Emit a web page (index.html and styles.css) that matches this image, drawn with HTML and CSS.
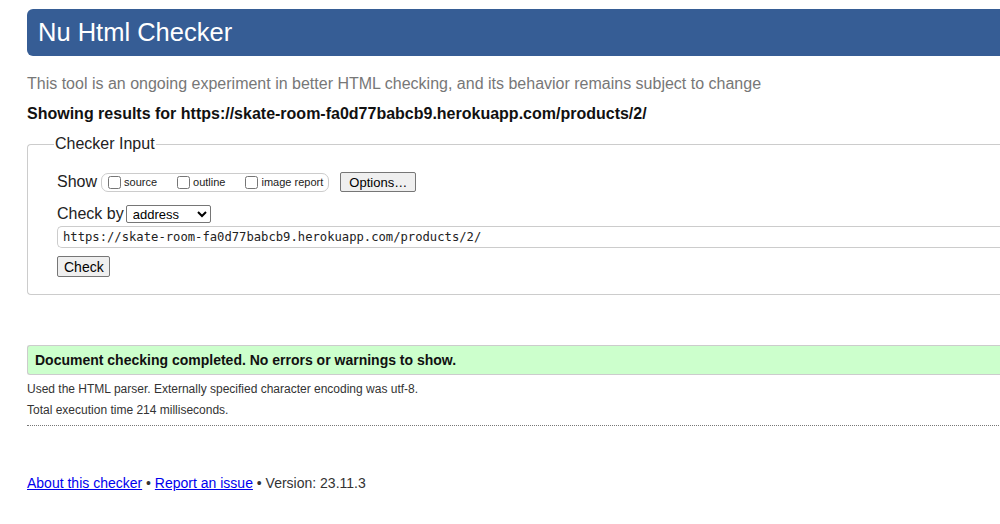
FILE: index.html
```html
<!DOCTYPE html>
<html>
<head>
<meta charset="utf-8">
<title>Nu Html Checker</title>
<link rel="stylesheet" href="styles.css">
</head>
<body>
<div class="page">
  <h1 class="header">Nu Html Checker</h1>
  <p class="intro">This tool is an ongoing experiment in better HTML checking, and its behavior remains subject to change</p>
  <p class="showing">Showing results for https://skate-room-fa0d77babcb9.herokuapp.com/products/2/</p>
  <fieldset class="input">
    <legend>Checker Input</legend>
    <div class="row show-row">
      <span class="label">Show</span>
      <span class="opts">
        <label><input type="checkbox">source</label>
        <label><input type="checkbox">outline</label>
        <label><input type="checkbox">image report</label>
      </span>
      <button class="btn options">Options…</button>
    </div>
    <div class="row by-row">
      <span class="label">Check by</span>
      <select class="sel"><option>address</option></select>
    </div>
    <input class="url" type="text" value="https://skate-room-fa0d77babcb9.herokuapp.com/products/2/">
    <button class="btn check">Check</button>
  </fieldset>
  <p class="success">Document checking completed. No errors or warnings to show.</p>
  <p class="details">Used the HTML parser. Externally specified character encoding was utf-8.</p>
  <p class="details">Total execution time 214 milliseconds.</p>
  <hr class="dots">
  <p class="footer"><a href="#">About this checker</a> • <a href="#">Report an issue</a> • Version: 23.11.3</p>
</div>
</body>
</html>
```
FILE: styles.css
```css
html, body {
  margin: 0;
  padding: 0;
  background: #fff;
  overflow: hidden;
}
.page {
  width: 1020px;
  padding: 9px 0 0 27px;
  font-family: "Liberation Sans", Arial, sans-serif;
  color: #222;
}
.header {
  margin: 0;
  height: 47px;
  background: #365d95;
  color: #fff;
  font-weight: normal;
  font-size: 25.5px;
  line-height: 47px;
  padding-left: 11px;
  border-radius: 6px 0 0 6px;
}
.intro {
  margin: 18px 0 0 0;
  font-size: 16px;
  line-height: 20px;
  color: #777;
}
.showing {
  margin: 10px 0 0 0;
  font-size: 16px;
  line-height: 20px;
  font-weight: bold;
  color: #111;
}
.input {
  margin: 11px 0 0 0;
  padding: 21px 0 17px 29px;
  border: 1px solid #ccc;
  border-radius: 4px 0 0 4px;
  border-right: none;
}
.input legend {
  font-size: 16px;
  color: #222;
  padding: 0 1px;
  margin-left: -3px;
  margin-bottom: -2px;
}
.row {
  display: flex;
  align-items: center;
}
.label {
  font-size: 16px;
  color: #222;
}
.show-row {
  height: 20px;
}
.opts {
  display: inline-flex;
  align-items: center;
  margin-left: 4px;
  height: 17px;
  border: 1px solid #ccc;
  border-radius: 7px;
  padding: 0 5px 0 6px;
  font-size: 11px;
}
.opts label {
  display: inline-flex;
  align-items: center;
  margin-right: 20px;
}
.opts label:last-child {
  margin-right: 0;
}
.opts input {
  margin: 0 3px 0 0;
  width: 13px;
  height: 13px;
}
.btn {
  font-family: "Liberation Sans", Arial, sans-serif;
  font-size: 13px;
  color: #000;
  background: #efefef;
  border: 1px solid #767676;
  border-radius: 2px;
  padding: 0 6px;
  height: 20px;
}
.options {
  margin-left: 11px;
  padding: 0 7px;
  width: 76px;
}
.by-row {
  margin-top: 12px;
  height: 20px;
}
.sel {
  margin-left: 2px;
  width: 85px;
  height: 18px;
  font-family: "Liberation Sans", Arial, sans-serif;
  font-size: 13px;
  border: 1px solid #767676;
  border-radius: 2px;
  background: #fff;
  padding: 0 2px;
}
.url {
  display: block;
  margin-top: 2px;
  width: 960px;
  height: 22px;
  box-sizing: border-box;
  border: 1px solid #ccc;
  border-right: none;
  border-radius: 5px 0 0 5px;
  padding: 0 5px;
  font-family: "DejaVu Sans Mono", monospace;
  font-size: 12.2px;
  color: #222;
}
.check {
  display: block;
  margin-top: 8px;
  width: 53px;
  height: 21px;
  font-size: 14px;
}
.success {
  margin: 50px 0 0 0;
  height: 28px;
  line-height: 28px;
  background: #ccffcc;
  border: 1px solid #ccc;
  border-right: none;
  border-radius: 3px 0 0 3px;
  padding-left: 7px;
  font-size: 14px;
  font-weight: bold;
  color: #111;
}
.details {
  margin: 7px 0 0 0;
  font-size: 12px;
  line-height: 14px;
  color: #333;
}
.details + .details {
  margin-top: 7px;
}
.dots {
  margin: 8px 0 0 0;
  border: none;
  border-top: 1px dotted #777;
  height: 0;
}
.footer {
  margin: 48px 0 0 0;
  font-size: 14px;
  line-height: 18px;
  color: #333;
}
.footer a {
  color: #0000ee;
}
```
